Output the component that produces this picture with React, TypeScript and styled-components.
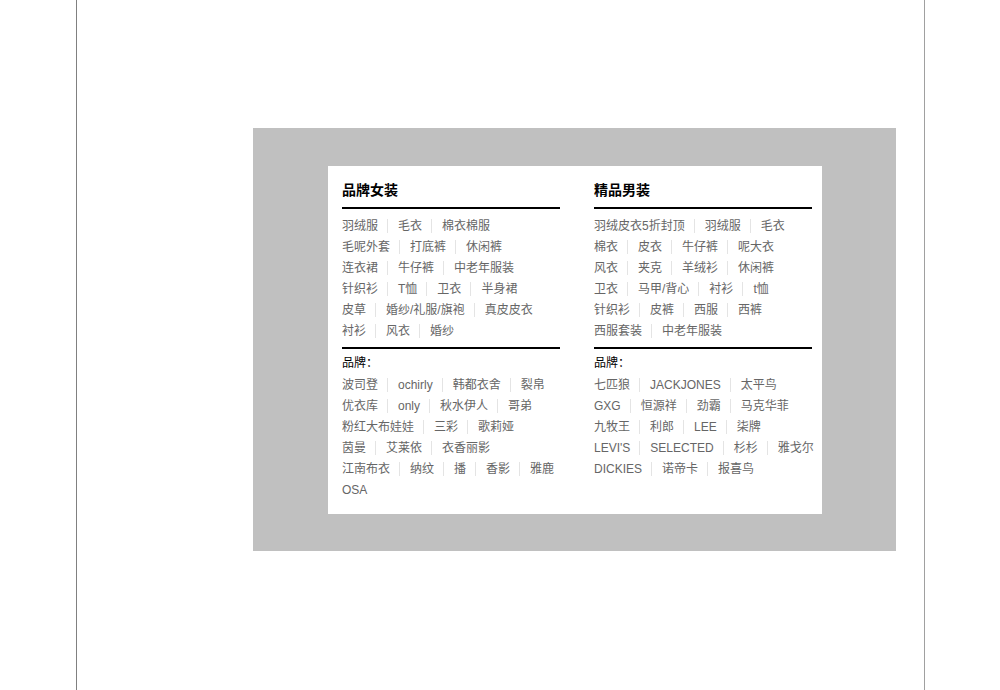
import React from "react";
import styled, { createGlobalStyle } from "styled-components";

interface ICategory {
  title: string;
  items: string[][];
  brands: string[][];
}

const categories: ICategory[] = [
  {
    title: "品牌女装",
    items: [
      ["羽绒服", "毛衣", "棉衣棉服"],
      ["毛呢外套", "打底裤", "休闲裤"],
      ["连衣裙", "牛仔裤", "中老年服装"],
      ["针织衫", "T恤", "卫衣", "半身裙"],
      ["皮草", "婚纱/礼服/旗袍", "真皮皮衣"],
      ["衬衫", "风衣", "婚纱"],
    ],
    brands: [
      ["波司登", "ochirly", "韩都衣舍", "裂帛"],
      ["优衣库", "only", "秋水伊人", "哥弟"],
      ["粉红大布娃娃", "三彩", "歌莉娅"],
      ["茵曼", "艾莱依", "衣香丽影"],
      ["江南布衣", "纳纹", "播", "香影", "雅鹿"],
      ["OSA"],
    ],
  },
  {
    title: "精品男装",
    items: [
      ["羽绒皮衣5折封顶", "羽绒服", "毛衣"],
      ["棉衣", "皮衣", "牛仔裤", "呢大衣"],
      ["风衣", "夹克", "羊绒衫", "休闲裤"],
      ["卫衣", "马甲/背心", "衬衫", "t恤"],
      ["针织衫", "皮裤", "西服", "西裤"],
      ["西服套装", "中老年服装"],
    ],
    brands: [
      ["七匹狼", "JACKJONES", "太平鸟"],
      ["GXG", "恒源祥", "劲霸", "马克华菲"],
      ["九牧王", "利郎", "LEE", "柒牌"],
      ["LEVI'S", "SELECTED", "杉杉", "雅戈尔"],
      ["DICKIES", "诺帝卡", "报喜鸟"],
    ],
  },
];

const GlobalStyle = createGlobalStyle`
  html, body {
    margin: 0;
    padding: 0;
    background: #fff;
    font-family: "Liberation Sans", "Noto Sans CJK SC", sans-serif;
  }
`;

const Page = styled.div`
  box-sizing: border-box;
  width: 849px;
  height: 690px;
  margin-left: 76px;
  border-left: 1px solid #808080;
  border-right: 1px solid #a0a0a0;
  padding: 128px 0 0 176px;
`;

const Backdrop = styled.div`
  box-sizing: border-box;
  width: 643px;
  height: 423px;
  background: #c0c0c0;
  padding: 38px 74px 37px 75px;
`;

const Panel = styled.div`
  box-sizing: border-box;
  height: 348px;
  background: #fff;
  padding: 12px 10px 0 14px;
  display: grid;
  grid-template-columns: 218px 218px;
  column-gap: 34px;
  align-items: start;
`;

const Column = styled.div`
  display: flex;
  flex-direction: column;
`;

const Title = styled.h3`
  margin: 0;
  font-size: 14px;
  font-weight: bold;
  color: #000;
  line-height: 24px;
  padding-bottom: 5px;
  border-bottom: 2px solid #000;
`;

const List = styled.div<{ $divided?: boolean }>`
  padding: ${(p) => (p.$divided ? "6px 0" : "0")};
  border-bottom: ${(p) => (p.$divided ? "2px solid #000" : "none")};
`;

const Row = styled.div`
  display: flex;
  align-items: center;
  height: 21px;
  white-space: nowrap;
`;

const Item = styled.a`
  display: inline-block;
  font-size: 12px;
  line-height: 14px;
  color: #666;
  text-decoration: none;
  padding: 0 9px 0 10px;
  border-left: 1px solid #e4e4e4;

  &:first-child {
    padding-left: 0;
    border-left: none;
  }
`;

const Label = styled.div`
  margin-top: 4px;
  font-size: 12px;
  line-height: 21px;
  color: #000;
`;

const LinkRows: React.FC<{ rows: string[][] }> = ({ rows }) => (
  <>
    {rows.map((row, i) => (
      <Row key={i}>
        {row.map((text) => (
          <Item key={text} href="#">
            {text}
          </Item>
        ))}
      </Row>
    ))}
  </>
);

export default function App() {
  return (
    <>
      <GlobalStyle />
      <Page>
        <Backdrop>
          <Panel>
            {categories.map((cat) => (
              <Column key={cat.title}>
                <Title>{cat.title}</Title>
                <List $divided>
                  <LinkRows rows={cat.items} />
                </List>
                <Label>品牌：</Label>
                <List>
                  <LinkRows rows={cat.brands} />
                </List>
              </Column>
            ))}
          </Panel>
        </Backdrop>
      </Page>
    </>
  );
}
